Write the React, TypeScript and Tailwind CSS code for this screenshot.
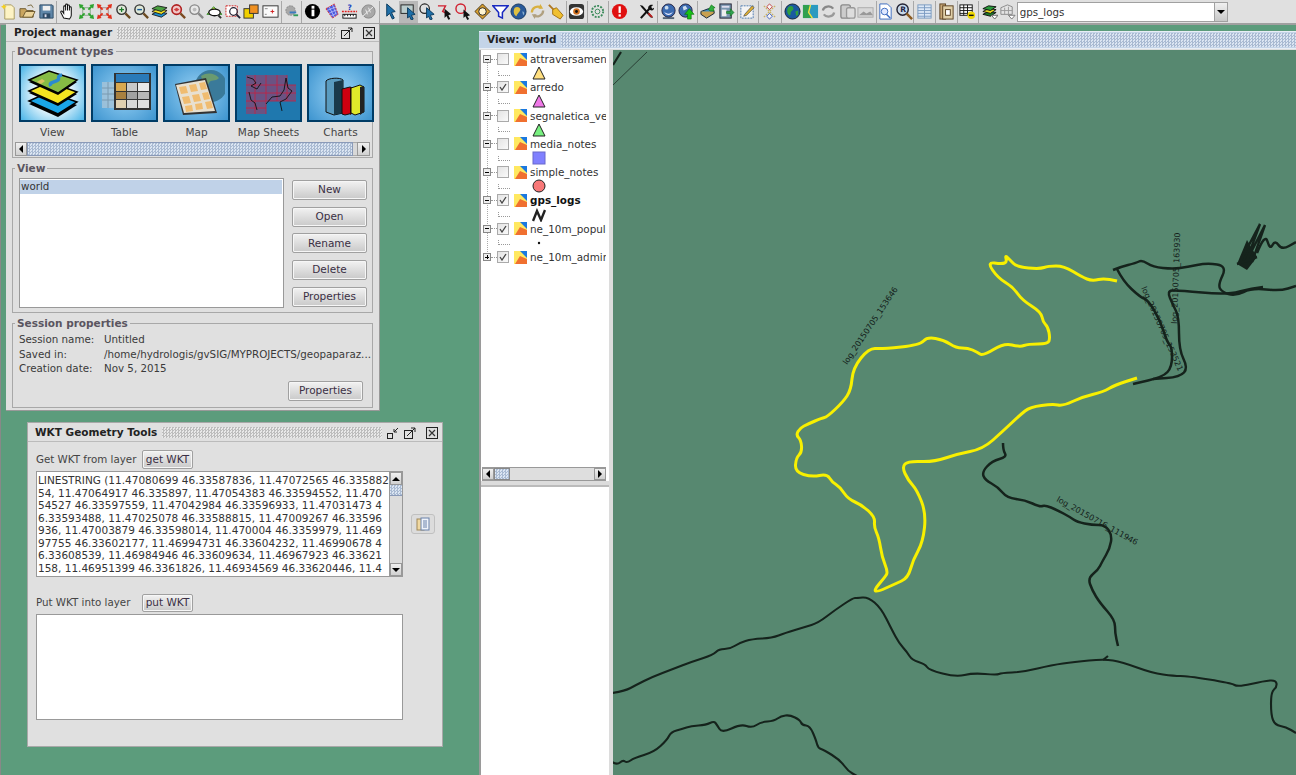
import type { ReactNode } from "react";

const font = "font-['DejaVu_Sans',sans-serif]";
const stippleGray = "bg-[repeating-conic-gradient(#bdbdbd_0_25%,#e9e9e9_0_50%)] bg-[length:3px_3px]";
const stippleBlue = "bg-[repeating-conic-gradient(#a9bad2_0_25%,#dbe5f2_0_50%)] bg-[length:3px_3px]";

// toolbar icons, 18x18 box
const ic: Record<string, ReactNode> = {
  newdoc: (<><path d="M4 2h7l3 3v12H4z" fill="#fdf3c4" stroke="#a89a60" /><path d="M3 1l1 2 2 1-2 1-1 2-1-2-2-1 2-1z" fill="#f5d020" /></>),
  open: (<><path d="M1 6h6l1 2h7v7H1z" fill="#c9a55f" stroke="#6e5a30" /><path d="M4 15l3-6h10l-3 6z" fill="#ecd49a" stroke="#6e5a30" /><path d="M9 3l4-1 2 3" fill="none" stroke="#7a6a40" /></>),
  save: (<><path d="M2 2h13l1 1v13H2z" fill="#5f86a8" stroke="#2c4a66" /><rect x="5" y="3" width="8" height="5" fill="#f0f0f0" /><rect x="5" y="11" width="8" height="5" fill="#2c4a66" /><rect x="7" y="12" width="2" height="3" fill="#dde" /></>),
  hand: (<path d="M5 16l-3-6c-.6-1.4 1-2 1.800-.8L5 11V4c0-1.300 2-1.300 2 0v4-6c0-1.300 2-1.300 2 0v6-5c0-1.300 2-1.300 2 0v5-3c0-1.300 2-1.300 2 0v8c0 2-1 3-2 4z" fill="#fff" stroke="#111" strokeWidth="1.100" />),
  extGreen: (<><rect x="5" y="5" width="8" height="8" fill="none" stroke="#8a8" /><path d="M1 1l5 1-4 4zM17 1l-5 1 4 4zM1 17l5-1-4-4zM17 17l-5-1 4-4z" fill="#2fa32f" /><path d="M3 3l4 4M15 3l-4 4M3 15l4-4M15 15l-4-4" stroke="#2fa32f" strokeWidth="2" /></>),
  extRed: (<><rect x="5" y="5" width="8" height="8" fill="none" stroke="#a88" /><path d="M1 1l5 1-4 4zM17 1l-5 1 4 4zM1 17l5-1-4-4zM17 17l-5-1 4-4z" fill="#e0301c" /><path d="M3 3l4 4M15 3l-4 4M3 15l4-4M15 15l-4-4" stroke="#e0301c" strokeWidth="2" /></>),
  zoomIn: (<><circle cx="7" cy="7" r="5" fill="#dfe8d8" stroke="#333" strokeWidth="1.500" /><path d="M4.500 7h5M7 4.500v5" stroke="#1a7a2a" strokeWidth="1.300" /><path d="M11 11l5 5" stroke="#6b4a20" strokeWidth="2.400" /></>),
  zoomOut: (<><circle cx="7" cy="7" r="5" fill="#dfe8d8" stroke="#333" strokeWidth="1.500" /><path d="M4.500 7h5" stroke="#1a5a9a" strokeWidth="1.500" /><path d="M11 11l5 5" stroke="#6b4a20" strokeWidth="2.400" /></>),
  layers: (<><path d="M1 12l6-3 10 2-6 4z" fill="#1d8fd0" stroke="#222" /><path d="M1 9l6-3 10 2-6 4z" fill="#f0e020" stroke="#222" /><path d="M1 6l6-3 10 2-6 4z" fill="#4aa040" stroke="#222" /></>),
  zoomRed: (<><circle cx="7" cy="7" r="5" fill="#f1c6c6" stroke="#b02020" strokeWidth="1.700" /><path d="M4 7l3-2 3 2-3 2z" fill="#d04040" /><path d="M11 11l5 5" stroke="#7a4a20" strokeWidth="2.400" /></>),
  zoomGray: (<><circle cx="7" cy="7" r="5" fill="#e8e8e8" stroke="#888" strokeWidth="1.500" /><circle cx="7" cy="7" r="2" fill="#bbb" /><path d="M11 11l5 5" stroke="#888" strokeWidth="2.400" /></>),
  zoomEye: (<><path d="M1 12L8 4l9 8z" fill="#dce84a" stroke="#2c8a2c" /><ellipse cx="9" cy="10" rx="6" ry="3.500" fill="#fff" stroke="#111" strokeWidth="1.400" /><path d="M13 13l3 3" stroke="#333" strokeWidth="2" /></>),
  zoomBox: (<><rect x="1" y="3" width="12" height="11" fill="#fff" stroke="#d02020" strokeDasharray="2 1" /><circle cx="9" cy="9" r="4" fill="none" stroke="#223" strokeWidth="1.300" /><path d="M12 12l4 4" stroke="#223" strokeWidth="2" /></>),
  squares: (<><rect x="1" y="6" width="10" height="10" fill="#f0d000" stroke="#333" /><rect x="7" y="2" width="9" height="9" fill="#f09020" stroke="#333" /></>),
  frame: (<><rect x="1" y="3" width="16" height="12" fill="#fafafa" stroke="#333" /><path d="M9 9h4M11 7v4" stroke="#d02020" /><path d="M3 6h3M3 12h2" stroke="#888" /></>),
  gear: (<><circle cx="8" cy="8" r="5" fill="#a8a8a8" stroke="#888" strokeDasharray="2 1" /><path d="M7 10h7" stroke="#3a7ac0" strokeWidth="2" /><path d="M11 13h5" stroke="#2f9a5a" strokeWidth="2" /></>),
  info: (<><circle cx="9" cy="9" r="8" fill="#000" /><rect x="8" y="7" width="3" height="7" fill="#fff" /><rect x="8" y="3" width="3" height="3" fill="#fff" /></>),
  polyHatch: (<><path d="M3 6l9-5 4 11-6 4z" fill="#4a5ae0" stroke="#e03030" strokeDasharray="2 1" /><path d="M4 8l10-4M6 11l9-4M8 14l6-3M6 3l6 12M10 2l4 10" stroke="#dfe4ff" strokeWidth=".6" /></>),
  measure: (<><rect x="2" y="12" width="14" height="4" fill="#fff" stroke="#111" /><path d="M4 12v2M7 12v2M10 12v2M13 12v2" stroke="#111" /><path d="M1 9h16" stroke="#e02020" strokeDasharray="2 1" strokeWidth="1.500" /><text x="7" y="7" fontSize="8" fontWeight="700" fill="#2040c0">?</text></>),
  leaf: (<><circle cx="9" cy="9" r="7" fill="#a8a8a8" stroke="#888" /><path d="M3 14L14 4M6 7l2 5M9 5l2 5" stroke="#eee" /></>),
  cursor: (<path d="M5 1l9 8-4 1 3 6-2 1-3-6-3 3z" fill="#1f6fa8" stroke="#0c3a5c" />),
  cursorBox: (<><rect x="1" y="2" width="13" height="9" fill="#bcc" stroke="#222" /><path d="M8 5l8 7-4 1 2 4-2 1-2-4-2 2z" fill="#1f6fa8" stroke="#0c3a5c" /></>),
  cursorCirc: (<><circle cx="6" cy="6" r="5" fill="none" stroke="#222" strokeWidth="1.300" /><path d="M8 5l8 7-4 1 2 4-2 1-2-4-2 2z" fill="#1f6fa8" stroke="#0c3a5c" /></>),
  cursorPoly: (<><path d="M1 3h8l-3 6 6 3" fill="none" stroke="#d02030" strokeWidth="1.500" /><path d="M8 6l7 6-3 1 2 4-2 .8-2-4-2 2z" fill="#111" /></>),
  cursorRed: (<><circle cx="6" cy="6" r="5" fill="none" stroke="#d02030" strokeWidth="1.500" /><path d="M9 7l7 6-3 1 2 3-2 1-2-4-2 2z" fill="#111" /></>),
  target: (<><path d="M9 1l8 8-8 8-8-8z" fill="#d8a030" stroke="#4a3410" /><circle cx="9" cy="9" r="4" fill="#fff5d0" stroke="#222" /></>),
  funnel: (<path d="M1 3h16l-6 7v6l-4-2v-4z" fill="#fff" stroke="#1a2ac0" strokeWidth="1.600" />),
  globeY: (<><circle cx="9" cy="9" r="8" fill="#2a5a9a" stroke="#1a3a60" /><path d="M5 5c3-2 6 0 6 2s-4 5-4 7c-3-1-4-6-2-9z" fill="#e0c040" /><path d="M13 9c2 0 3 2 1 4z" fill="#8ab0d0" /></>),
  swirl: (<><path d="M3 10c0-5 6-8 10-5" fill="none" stroke="#d8b040" strokeWidth="2.400" /><path d="M15 8c0 5-6 8-10 5" fill="none" stroke="#b0a080" strokeWidth="2.400" /><path d="M12 1l3 5-5 0z" fill="#d8b040" /><path d="M6 17l-3-5 5 0z" fill="#b0a080" /></>),
  broom: (<><path d="M2 2l6 6" stroke="#b07820" strokeWidth="2" /><path d="M6 7l4-2 7 8-3 4-8-5z" fill="#f0c030" stroke="#a07010" /></>),
  eye: (<><rect x="1" y="1" width="16" height="16" rx="3" fill="#333" /><ellipse cx="9" cy="9" rx="7" ry="4.500" fill="#fff" /><circle cx="9" cy="9" r="3.500" fill="#d07020" /><circle cx="9" cy="9" r="1.500" fill="#111" /></>),
  gearGreen: (<><circle cx="9" cy="9" r="6" fill="none" stroke="#3a8a5a" strokeWidth="2" strokeDasharray="2 1.400" /><circle cx="9" cy="9" r="2.500" fill="none" stroke="#3a8a5a" /></>),
  alert: (<><circle cx="9" cy="9" r="8" fill="#e01010" /><rect x="8" y="3.500" width="2.400" height="7" fill="#fff" /><rect x="8" y="12" width="2.400" height="2.400" fill="#fff" /></>),
  tools: (<><path d="M3 16L13 5" stroke="#111" strokeWidth="2.200" /><path d="M11 6c-1-3 2-5 5-4l-2 2 1 2 2-1c0 3-3 4-6 1z" fill="#111" /><path d="M2 2l3 1 9 10 2 3-3-1L4 5z" fill="#111" /><path d="M11 11l4 4" stroke="#c02020" strokeWidth="2" /></>),
  globeB: (<><path d="M3 16h12" stroke="#567" strokeWidth="2" /><circle cx="9" cy="8" r="7" fill="#3a6ab0" stroke="#224" /><path d="M4 9c3 3 7 3 10 0-3 5-7 5-10 0z" fill="#eef" /><circle cx="7" cy="5" r="2" fill="#cde" /></>),
  globeUp: (<><circle cx="8" cy="8" r="7" fill="#3a6ab0" stroke="#224" /><path d="M5 4l3-1 2 3-4 2z" fill="#cde" /><path d="M12 6l5 6h-3v5h-4v-5H7z" fill="#18c018" stroke="#060" strokeWidth=".6" /></>),
  boxUp: (<><path d="M1 9l8-3 6 3-8 5z" fill="#3a8ac0" stroke="#123" /><path d="M1 9v3l6 4 8-5V9" fill="#c8a050" stroke="#123" /><path d="M9 7l3-5 4 3-2 .5 1 3-4 0z" fill="#30b040" stroke="#060" strokeWidth=".6" /></>),
  docArrow: (<><rect x="2" y="1" width="12" height="15" fill="#7a96b0" stroke="#223" /><rect x="4" y="3" width="8" height="2" fill="#dde" /><rect x="4" y="7" width="5" height="7" fill="#eee" /><path d="M9 9h4V6l4 4-4 4v-3H9z" fill="#30a050" stroke="#060" strokeWidth=".5" /></>),
  pencilBox: (<><rect x="2" y="3" width="13" height="13" fill="#f4f4f4" stroke="#4a7ab0" strokeDasharray="2 1" /><path d="M6 12l8-9 2 2-8 8-3 1z" fill="#e0b030" stroke="#444" strokeWidth=".7" /></>),
  cross: (<><path d="M3 3l12 12M15 3L3 15" stroke="#c8b060" strokeWidth="1.300" strokeDasharray="2 1" /><path d="M9 1l3 3-3 3-3-3z" fill="#f4f4f4" stroke="#c04040" /><path d="M9 11l3 3-3 3-3-3z" fill="#f4f4f4" stroke="#4060c0" /></>),
  globeG: (<><circle cx="9" cy="9" r="8" fill="#1a5aa0" stroke="#123" /><path d="M5 4c3-2 5 0 5 2s-3 2-3 5-2 2-3 0-1-5 1-7z" fill="#30a040" /><path d="M12 9l3-1 0 4-2 2z" fill="#30a040" /></>),
  mapG: (<><path d="M1 2h16v14H1z" fill="#2a9ac0" /><path d="M1 2h8l-2 8 4 6H1z" fill="#30a050" /><path d="M9 2l-2 8 4 6" fill="none" stroke="#f0e040" strokeWidth="1.500" /></>),
  arrowsG: (<><path d="M3 8a6 5 0 0 1 11-2" fill="none" stroke="#888" strokeWidth="2.400" /><path d="M15 10a6 5 0 0 1-11 2" fill="none" stroke="#999" strokeWidth="2.400" /></>),
  docsG: (<><rect x="2" y="2" width="10" height="14" rx="2" fill="#ccc" stroke="#888" strokeWidth="1.400" /><rect x="8" y="5" width="9" height="11" rx="2" fill="#ddd" stroke="#999" strokeWidth="1.400" /></>),
  rectG: (<><rect x="1" y="5" width="16" height="10" fill="#d8d8d8" stroke="#aaa" /><path d="M2 13l5-4 3 2 4-2 3 4z" fill="#999" /></>),
  pageMag: (<><path d="M3 1h8l4 4v12H3z" fill="#fff" stroke="#3a6ac0" /><circle cx="8" cy="9" r="3.500" fill="#dfe8ff" stroke="#3a6ac0" /><path d="M10 12l4 4" stroke="#3a6ac0" strokeWidth="1.500" /></>),
  magR: (<><circle cx="7" cy="7" r="6" fill="#c8d8e8" stroke="#223" strokeWidth="1.500" /><text x="4.500" y="10" fontSize="8" fontWeight="700" fill="#224">R</text><path d="M11 11l6 6" stroke="#8a5a20" strokeWidth="2.600" /></>),
  tableB: (<><rect x="2" y="2" width="14" height="14" fill="#dce8f6" stroke="#7a9ac0" /><path d="M2 5h14M2 8h14M2 11h14M2 14h14M9 2v14" stroke="#7a9ac0" /></>),
  docB: (<><rect x="2" y="1" width="6" height="16" fill="#c8a878" stroke="#5a4020" /><rect x="5" y="3" width="11" height="14" fill="#e0cfa8" stroke="#5a4020" /><rect x="8" y="7" width="5" height="6" fill="#fff" stroke="#5a4020" /></>),
  tableM: (<><rect x="1" y="2" width="13" height="11" fill="#fff" stroke="#111" /><path d="M1 5h13M1 8h13M1 11h13M5 2v11M9 2v11" stroke="#111" /><circle cx="13" cy="13" r="4" fill="#f0d800" /><rect x="10.500" y="12.300" width="5" height="1.500" fill="#111" /></>),
  layersDown: (<><path d="M2 12l6-3 8 1-6 4z" fill="#1a7a2a" stroke="#111" /><path d="M2 9l6-3 8 1-6 4z" fill="#e8d820" stroke="#111" /><path d="M2 6l6-3 8 1-6 4z" fill="#2a9a3a" stroke="#111" /><path d="M11 13h7l-3.500 4z" fill="#fff" stroke="#666" /></>),
  tableDown: (<><path d="M2 5l7-3 5 2v8H2z" fill="#e4e4e4" stroke="#888" /><path d="M2 8h12M6 5v7M10 4v8" stroke="#999" /><path d="M10 13h7l-3.500 4z" fill="#fff" stroke="#777" /></>),
};

const groups: { w: string; icons: string[]; gap?: string }[] = [
  { w: "w-[57px]", icons: ["newdoc", "open", "save"] },
  { w: "w-[225px]", icons: ["hand", "extGreen", "extRed", "zoomIn", "zoomOut", "layers", "zoomRed", "zoomGray", "zoomEye", "zoomBox", "squares", "frame"] },
  { w: "w-[20px]", icons: ["gear"] },
  { w: "w-[78px]", icons: ["info", "polyHatch", "measure", "leaf"] },
  { w: "w-[187px]", icons: ["cursor", "cursorBox", "cursorCirc", "cursorPoly", "cursorRed", "target", "funnel", "globeY", "swirl", "broom"] },
  { w: "w-[21px]", icons: ["eye"] },
  { w: "w-[21px]", icons: ["gearGreen"] },
  { w: "w-[49px]", icons: ["alert", "tools"], gap: "gap-2" },
  { w: "w-[40px]", icons: ["globeB", "globeUp"] },
  { w: "w-[40px]", icons: ["boxUp", "docArrow"] },
  { w: "w-[21px]", icons: ["pencilBox"] },
  { w: "w-[23px]", icons: ["cross"] },
  { w: "w-[95px]", icons: ["globeG", "mapG", "arrowsG", "docsG", "rectG"] },
  { w: "w-[37px]", icons: ["pageMag", "magR"] },
  { w: "w-[22px]", icons: ["tableB"] },
  { w: "w-[22px]", icons: ["docB"] },
  { w: "w-[21px]", icons: ["tableM"] },
];

function Icon({ name, active }: { name: string; active?: boolean }) {
  return (
    <div className={`flex items-center justify-center w-[18.4px] h-[22px] shrink-0 ${active ? "bg-[#b8b8b8]" : ""}`}>
      <svg width="17" height="17" viewBox="0 0 18 18">{ic[name]}</svg>
    </div>
  );
}

function Toolbar() {
  return (
    <div className="flex items-center h-[23px] bg-[#e0e0e0] border-b-2 border-[#a0a0a0] box-content">
      {groups.map((g, i) => (
        <div key={i} className={`flex items-center justify-center h-[22px] border-r border-[#a8a8a8] shrink-0 ${g.w} ${g.gap ?? ""}`}>
          {g.icons.map((n) => <Icon key={n} name={n} active={n === "cursorBox"} />)}
        </div>
      ))}
      <div className="flex items-center ml-[1px] shrink-0">
        <Icon name="layersDown" />
        <Icon name="tableDown" />
      </div>
      <div className="flex w-[211px] h-[20px] border border-[#a0a0a0] bg-white shrink-0">
        <div className="flex-1 px-[2px] text-[10.3px] leading-[18px] text-[#333]">gps_logs</div>
        <div className="w-[13px] flex items-center justify-center bg-gradient-to-b from-[#f0f0f0] to-[#c8c8c8] border-l border-[#a0a0a0]">
          <div className="w-0 h-0 border-x-[4px] border-x-transparent border-t-[4px] border-t-black" />
        </div>
      </div>
    </div>
  );
}

function Btn({ label, className }: { label: string; className: string }) {
  return (
    <div className={`flex items-center justify-center rounded-[2px] border border-[#a0a0a0] bg-gradient-to-b from-[#f2f2f2] to-[#c9c9c9] shadow-[inset_0_0_0_1px_#f6f6f6] text-[10.5px] text-[#3a2f44] ${className}`}>
      {label}
    </div>
  );
}

function Arrow({ dir }: { dir: "l" | "r" | "u" | "d" }) {
  const tri = {
    l: "border-y-[4px] border-y-transparent border-r-[4px] border-r-black",
    r: "border-y-[4px] border-y-transparent border-l-[4px] border-l-black",
    u: "border-x-[4px] border-x-transparent border-b-[4px] border-b-black",
    d: "border-x-[4px] border-x-transparent border-t-[4px] border-t-black",
  }[dir];
  return <div className={`w-0 h-0 ${tri}`} />;
}

function ArrowBtn({ dir, className }: { dir: "l" | "r" | "u" | "d"; className: string }) {
  return (
    <div className={`flex items-center justify-center shrink-0 bg-gradient-to-b from-[#f0f0f0] to-[#d0d0d0] border border-[#999] ${className}`}>
      <Arrow dir={dir} />
    </div>
  );
}

function Group({ title, className, children }: { title: string; className: string; children: ReactNode }) {
  return (
    <div className={`relative border border-[#a8a8a8] ${className}`}>
      <div className="absolute left-[2px] top-[-7px] bg-[#e0e0e0] px-[2px] text-[10.5px] leading-[13px] font-bold text-[#5a5560]">{title}</div>
      {children}
    </div>
  );
}

function TitleIcon({ kind }: { kind: "max" | "close" | "min" }) {
  if (kind === "close") {
    return (
      <svg width="12" height="12" viewBox="0 0 12 12" className="shrink-0">
        <rect x=".5" y=".5" width="11" height="11" fill="#ddd" stroke="#222" />
        <path d="M3 3l6 6M9 3l-6 6" stroke="#333" strokeWidth="1.200" />
      </svg>
    );
  }
  if (kind === "min") {
    return (
      <svg width="12" height="12" viewBox="0 0 12 12" className="shrink-0">
        <rect x=".5" y="6.500" width="5" height="5" fill="none" stroke="#222" />
        <path d="M11 1L7 5M7 2v3h3" fill="none" stroke="#222" />
      </svg>
    );
  }
  return (
    <svg width="12" height="12" viewBox="0 0 12 12" className="shrink-0">
      <rect x=".5" y="3.500" width="8" height="8" fill="none" stroke="#222" />
      <path d="M3 9l8-8M7 1h4v4" fill="none" stroke="#222" />
    </svg>
  );
}

const docIcons: Record<string, ReactNode> = {
  View: (
    <svg width="56" height="50" viewBox="0 0 56 50">
      <path d="M4 36L24 27 52 37 33 49z" fill="#000" />
      <path d="M4 33L24 24 52 34 33 46z" fill="#1aa6e8" stroke="#000" strokeWidth="1.500" />
      <path d="M4 25L24 16 52 26 33 38z" fill="#000" />
      <path d="M4 23L24 14 52 24 33 36z" fill="#f4e420" stroke="#000" strokeWidth="1.500" />
      <path d="M4 14L24 5 52 14 33 27z" fill="#000" />
      <path d="M4 12L24 3 52 12 33 25z" fill="#86bc44" stroke="#000" strokeWidth="1.500" />
      <path d="M26 18c-3-4 5-4 7-6s-2-4 4-5" fill="none" stroke="#2a8ad0" strokeWidth="3.500" />
      <path d="M12 14l5-3 3 2-4 3z" fill="#d8c060" />
    </svg>
  ),
  Table: (
    <svg width="56" height="50" viewBox="0 0 56 50">
      <rect x="5" y="14" width="14" height="26" fill="#a8c4d8" opacity=".8" />
      <path d="M5 20h14M5 26h14M5 32h14M11 14v26" stroke="#7a9ab0" />
      <rect x="17" y="5" width="37" height="37" fill="#333" />
      <rect x="19" y="6" width="33" height="8" fill="#2a7ab8" />
      <rect x="19" y="15" width="10" height="8" fill="#d8a850" />
      <rect x="19" y="24" width="10" height="7" fill="#a88040" />
      <rect x="19" y="32" width="10" height="8" fill="#e0d0b0" />
      <rect x="30" y="15" width="10" height="8" fill="#c8c8c8" />
      <rect x="30" y="24" width="10" height="7" fill="#a0a0a0" />
      <rect x="30" y="32" width="10" height="8" fill="#d8d8d8" />
      <rect x="41" y="15" width="11" height="8" fill="#e8e8e8" />
      <rect x="41" y="24" width="11" height="7" fill="#b8b8b8" />
      <rect x="41" y="32" width="11" height="8" fill="#e0e0e0" />
    </svg>
  ),
  Map: (
    <svg width="56" height="50" viewBox="0 0 56 50">
      <circle cx="42" cy="18" r="16" fill="#3a7a9a" />
      <path d="M32 8c6-4 14-3 18 2-4 4-8 1-10 5s-6 0-8-7z" fill="#6a9a70" />
      <path d="M6 16l31-6 11 35-34 2z" fill="#333" />
      <path d="M7 17l29-5 10 31-31 2z" fill="#e8e0d0" />
      <path d="M10 19l7-1 2 7-7 1zM20 17l7-1 2 7-7 1zM30 15l6-1 2 7-6 1zM13 29l7-1 2 7-7 1zM23 27l7-1 2 7-7 1zM33 25l6-1 2 7-6 1zM16 38l7-1 1 6-7 1zM26 36l7-1 1 6-7 1zM36 34l6-1 2 7-6 1z" fill="#f0bc70" />
    </svg>
  ),
  "Map Sheets": (
    <svg width="56" height="50" viewBox="0 0 56 50">
      <path d="M5 7H46V17H55V33H25V46H5Z" fill="#7d4a78" opacity=".8" />
      <path d="M5 17H55M5 25H55M5 33H55M5 40H25M14 7V46M25 7V46M36 7V33M46 7V33" stroke="#c82040" strokeWidth=".8" />
      <path d="M6 9l6 2 3 4-5 3 6 3 4-6M8 24l2 8 4 3 2 7M25 36l6-7 8-1 4-6 2-12 2 10 4 3-6 8-6 3 2 9" fill="none" stroke="#111" strokeWidth=".9" />
    </svg>
  ),
  Charts: (
    <svg width="56" height="50" viewBox="0 0 56 50">
      <path d="M13 13c2-3 14-4 17-1v33l-9 2-8-3z" fill="#5a9cc0" stroke="#111" />
      <path d="M21 14l9-2v33l-9 2z" fill="#1a3a4a" />
      <path d="M29 21l8-2 3 1v25l-8 2-3-1z" fill="#d00010" stroke="#111" />
      <path d="M37 19l3 1v25l-3 2z" fill="#400" />
      <path d="M38 20l9-3 4 2v25l-9 3-4-2z" fill="#dfe82a" stroke="#111" />
      <path d="M47 19l4-1v26l-4 3z" fill="#222" />
    </svg>
  ),
};

function DocTile({ name }: { name: string }) {
  const bg: Record<string, string> = {
    View: "bg-[radial-gradient(circle,#ffffff_35%,#48b4e8_100%)]",
    Table: "bg-[radial-gradient(circle,#7ec0ea_30%,#3d94cf_100%)]",
    Map: "bg-[radial-gradient(circle,#7ec0ea_30%,#3d94cf_100%)]",
    "Map Sheets": "bg-[#1f78ae]",
    Charts: "bg-[radial-gradient(circle,#7ec0ea_30%,#3d94cf_100%)]",
  };
  return (
    <div className="flex flex-col items-center w-[67px] shrink-0">
      <div className={`flex items-center justify-center w-[67px] h-[58px] border-2 border-[#003c66] ${bg[name]}`}>
        {docIcons[name]}
      </div>
      <div className="mt-[4px] text-[10.5px] leading-[13px] text-[#444]">{name}</div>
    </div>
  );
}

function ProjectManager() {
  return (
    <div className="absolute left-[6px] top-[24px] w-[374px] h-[387px] bg-[#e0e0e0] border-r border-b border-[#999] flex flex-col">
      <div className="flex items-center h-[18px] pl-[8px] pr-[4px] gap-[5px] border-b border-[#bbb]">
        <span className="text-[10.5px] font-bold text-[#222]">Project manager</span>
        <div className={`flex-1 h-[12px] ${stippleGray}`} />
        <TitleIcon kind="max" />
        <div className="w-0" />
        <TitleIcon kind="close" />
      </div>
      <Group title="Document types" className="mx-[6px] mt-[9px] h-[107px] px-[6px] pt-[12px]">
        <div className="flex gap-[5px]">
          {["View", "Table", "Map", "Map Sheets", "Charts"].map((n) => <DocTile key={n} name={n} />)}
        </div>
        <div className="flex h-[14px] mt-[3px] -mx-[4px]">
          <ArrowBtn dir="l" className="w-[12px]" />
          <div className={`w-[326px] border border-[#8a9ab8] ${stippleBlue}`} />
          <div className="flex-1 bg-[#d8d8d8] border-y border-[#aaa]" />
          <ArrowBtn dir="r" className="w-[13px]" />
        </div>
      </Group>
      <Group title="View" className="mx-[6px] mt-[10px] h-[145px] pl-[6px] pt-[9px] flex">
        <div className="w-[265px] h-[130px] bg-white border border-[#999]">
          <div className="h-[14px] mt-[1px] pl-[1px] mr-[1px] bg-[#c0d2e8] text-[10.3px] leading-[13px] text-[#333]">world</div>
        </div>
        <div className="flex flex-col ml-[8px] pt-[2px] gap-[6.700px]">
          {["New", "Open", "Rename", "Delete", "Properties"].map((n) => <Btn key={n} label={n} className="w-[75px] h-[20px]" />)}
        </div>
      </Group>
      <Group title="Session properties" className="mx-[6px] mt-[10px] h-[85px] px-[6px] pt-[8px]">
        {[["Session name:", "Untitled"], ["Saved in:", "/home/hydrologis/gvSIG/MYPROJECTS/geopaparaz..."], ["Creation date:", "Nov 5, 2015"]].map(([k, v]) => (
          <div key={k} className="flex h-[14.500px] text-[10.3px] leading-[14px] text-[#3a3a3a] whitespace-nowrap">
            <div className="w-[85px] shrink-0">{k}</div>
            <div>{v}</div>
          </div>
        ))}
        <div className="flex justify-end mt-[5px] pr-[3px]">
          <Btn label="Properties" className="w-[75px] h-[20px]" />
        </div>
      </Group>
    </div>
  );
}

const wkt = [
  "LINESTRING (11.47080699 46.33587836, 11.47072565 46.335882",
  "54, 11.47064917 46.335897, 11.47054383 46.33594552, 11.470",
  "54527 46.33597559, 11.47042984 46.33596933, 11.47031473 4",
  "6.33593488, 11.47025078 46.33588815, 11.47009267 46.33596",
  "936, 11.47003879 46.33598014, 11.470004 46.3359979, 11.469",
  "97755 46.33602177, 11.46994731 46.33604232, 11.46990678 4",
  "6.33608539, 11.46984946 46.33609634, 11.46967923 46.33621",
  "158, 11.46951399 46.3361826, 11.46934569 46.33620446, 11.4",
];

function WktTools() {
  return (
    <div className="absolute left-[27px] top-[422px] w-[416px] h-[325px] bg-[#e0e0e0] border border-[#a8a8a8] flex flex-col">
      <div className="flex items-center h-[19px] pt-[1px] pl-[7px] pr-[4px] gap-[5px] border-b border-[#bbb]">
        <span className="text-[10.5px] font-bold text-[#222]">WKT Geometry Tools</span>
        <div className={`flex-1 h-[11px] ${stippleGray}`} />
        <TitleIcon kind="min" />
        <TitleIcon kind="max" />
        <div className="w-0" />
        <TitleIcon kind="close" />
      </div>
      <div className="flex items-center h-[19px] mt-[8px] pl-[8px] text-[10.3px] text-[#444] whitespace-nowrap">
        <span className="w-[106px]">Get WKT from layer</span>
        <Btn label="get WKT" className="w-[51px] h-[19px]" />
      </div>
      <div className="flex items-center mt-[2px] pl-[8px]">
        <div className="flex w-[367px] h-[106px] bg-white border border-[#999]">
          <div className="flex-1 overflow-hidden pl-[1px] pt-[2px] text-[10.5px] leading-[12.500px] text-[#333] whitespace-nowrap">
            {wkt.map((l) => <div key={l}>{l}</div>)}
          </div>
          <div className="flex flex-col w-[13px] bg-[#dcdcdc] border-l border-[#999]">
            <ArrowBtn dir="u" className="h-[13px]" />
            <div className={`h-[11px] border-b border-[#8a9ab8] ${stippleBlue}`} />
            <div className="flex-1" />
            <ArrowBtn dir="d" className="h-[13px]" />
          </div>
        </div>
        <div className="flex items-center justify-center ml-[8px] w-[24px] h-[20px] rounded-[3px] border border-[#c0c0c0] bg-[#dcdcdc]">
          <svg width="14" height="14" viewBox="0 0 14 14">
            <rect x="1" y="2" width="7" height="11" fill="#f0d8a0" stroke="#a08858" />
            <rect x="5" y="1" width="8" height="12" fill="#eef2fa" stroke="#6a82aa" />
            <path d="M7 4h4M7 6h4M7 8h4M7 10h4" stroke="#6a82aa" />
          </svg>
        </div>
      </div>
      <div className="flex items-center h-[18px] mt-[17px] pl-[8px] text-[10.3px] text-[#444] whitespace-nowrap">
        <span className="w-[106px]">Put WKT into layer</span>
        <Btn label="put WKT" className="w-[51px] h-[18px]" />
      </div>
      <div className="ml-[8px] mt-[2px] w-[367px] h-[106px] bg-white border border-[#999]" />
    </div>
  );
}

const layers: { name: string; checked: boolean; bold?: boolean; plus?: boolean; sym?: ReactNode }[] = [
  { name: "attraversamen", checked: false, sym: <path d="M7 1l6 12H1z" fill="#ffdf80" stroke="#222" /> },
  { name: "arredo", checked: true, sym: <path d="M7 1l6 12H1z" fill="#f078e8" stroke="#222" /> },
  { name: "segnaletica_ve", checked: false, sym: <path d="M7 1l6 12H1z" fill="#78f080" stroke="#222" /> },
  { name: "media_notes", checked: false, sym: <rect x="1" y="1" width="12" height="12" fill="#8080ff" stroke="#6868cc" /> },
  { name: "simple_notes", checked: false, sym: <circle cx="7" cy="7" r="6" fill="#f87878" stroke="#222" /> },
  { name: "gps_logs", checked: true, bold: true, sym: <path d="M1 13L5 3l4 9 4-10" fill="none" stroke="#222" strokeWidth="2.400" /> },
  { name: "ne_10m_popul", checked: true, sym: <circle cx="7" cy="7" r="1.200" fill="#111" /> },
  { name: "ne_10m_admin", checked: true, plus: true },
];

function TreeRow({ l }: { l: (typeof layers)[number] }) {
  return (
    <div className="h-[28.300px]">
      <div className="flex items-center h-[14px]">
        <div className="relative z-10 flex items-center justify-center shrink-0 w-[8px] h-[8px] ml-[2px] border border-[#888] bg-[#eee]">
          <div className="w-[4px] h-[1px] bg-black" />
          {l.plus && <div className="absolute w-[1px] h-[4px] bg-black" />}
        </div>
        <div className="w-[6px] shrink-0 border-t border-dotted border-[#999]" />
        <div className="flex items-center justify-center shrink-0 w-[12px] h-[12px] border border-[#aaa] bg-gradient-to-br from-[#e4e4e4] to-[#fafafa]">
          {l.checked && (
            <svg width="8" height="8" viewBox="0 0 8 8">
              <path d="M1 4l2 3 4-6" fill="none" stroke="#444" strokeWidth="1.300" />
            </svg>
          )}
        </div>
        <svg width="13" height="13" viewBox="0 0 13 13" className="ml-[5px] shrink-0">
          <rect width="13" height="13" fill="#ffe860" />
          <path d="M6 0h7v7z" fill="#1a78e0" />
          <path d="M1 13l5-8 7 3v5z" fill="#f07030" />
        </svg>
        <span className={`ml-[3px] text-[10.4px] leading-[14px] whitespace-nowrap ${l.bold ? "font-bold text-[#111]" : "text-[#333]"}`}>{l.name}</span>
      </div>
      {l.sym && (
        <div className="flex items-center h-[14.300px] pl-[17px]">
          <div className="w-[12px] h-[5px] border-l border-b border-dotted border-[#999]" />
          <svg width="14" height="14" viewBox="0 0 14 14" className="ml-[22px] shrink-0">{l.sym}</svg>
        </div>
      )}
    </div>
  );
}

function Tree() {
  return (
    <div className="flex flex-col w-[134px] shrink-0 border-l-2 border-[#9a9a9a] border-r-[4px] border-r-[#dcdcdc] bg-white">
      <div className="relative h-[417px] mr-[3px] overflow-hidden">
        <div className="absolute left-[6px] top-[8px] h-[198px] border-l border-dotted border-[#aaa]" />
        <div className="relative pt-[2px]">
          {layers.map((l) => <TreeRow key={l.name} l={l} />)}
        </div>
      </div>
      <div className="flex h-[14px] mr-[3px] ml-[1px] border-y border-[#999] bg-[#dedede]">
        <ArrowBtn dir="l" className="w-[12px]" />
        <div className={`w-[16px] border border-[#888] ${stippleBlue}`} />
        <div className="flex-1" />
        <ArrowBtn dir="r" className="w-[12px]" />
      </div>
      <div className="h-[6px] bg-[#dcdcdc] border-b-2 border-[#bbb]" />
      <div className="flex-1 bg-white" />
    </div>
  );
}

const yellow =
  "M1117 281L1105 278L1092 281L1082 277L1064 266L1048 266L1040 269L1017 267L1010 260L1005 255L1007 262L1002 264L987 262L998 278L1013 287L1022 300L1041 312L1043 322L1048 327L1050 338L1048 344L1028 344L1020 347L1004 343L983 356L977 352L968 348L956 348L944 340L927 337L920 345L882 349L869 348L853 368L851 390L843 402L827 417L822 418L808 424L800 428L796 435L801 440L802 452L796 458L795 472L812 477L827 474L832 482L840 487L848 499L862 505L875 517L874 527L879 538L882 557L888 572L885 577L874 590L877 592L895 584L908 578L913 560L923 542L926 513L917 490L908 480L902 467L908 461L934 462L957 454L983 449L1003 431L1020 415L1030 407L1053 404L1063 406L1082 397L1103 392L1115 385L1137 378";

const blackTop = [
  "M1113 270L1120 267L1136 263L1142 260L1153 267L1173 269L1187 267L1207 263L1227 266L1218 285L1222 292L1235 296L1252 288L1280 291L1296 286",
  "M1117 269L1123 281L1140 297L1148 300L1160 320L1167 342L1172 347L1172 367L1163 377L1133 384",
  "M1263 287L1252 288L1227 295L1177 290L1167 291L1173 305L1179 317L1179 350L1188 368L1180 377L1153 379",
  "M1257 253L1265 233L1270 250L1275 240L1282 250L1296 242",
  "M1003 443L1003 450L1007 457L992 461L982 472L985 480L998 487L1007 498L1025 500L1040 507L1045 505L1057 510L1070 517L1077 522L1092 525L1105 525L1112 535L1110 548L1102 562L1098 570L1088 578L1092 590L1100 603L1115 620L1115 633L1118 646",
];

const blackBottom = [
  "M612 693L625 691L636 685L652 677L673 669L691 662L713 655L719 649L730 649L739 643L752 639L772 638L785 633L805 627L818 623L835 610L853 598L857 598L868 597L881 608L892 630L899 643L907 652L912 660L925 664L929 670L956 677L973 673L997 675L1001 673L1023 672L1052 665L1074 662L1104 659L1122 662L1152 673L1174 676L1187 676L1231 683L1238 687L1264 681L1276 680L1277 687L1271 692L1271 715L1275 725L1286 727L1296 733",
  "M612 762L617 765L623 760L627 763L634 758L654 752L667 740L671 732L682 729L691 726L706 725L714 721L717 725L722 733L741 724L752 728L761 722L774 721L781 716L790 715L800 720L802 725L810 726L816 740L818 748L824 750L840 760L848 771L857 776",
];

// rough tracks look better with the corners rounded off
function smooth(d: string) {
  const p = d.slice(1).split("L").map((s) => s.split(" ").map(Number));
  let out = `M${p[0][0]} ${p[0][1]}`;
  for (let i = 1; i < p.length - 1; i++) {
    const mx = (p[i][0] + p[i + 1][0]) / 2;
    const my = (p[i][1] + p[i + 1][1]) / 2;
    out += `Q${p[i][0]} ${p[i][1]} ${mx} ${my}`;
  }
  const last = p[p.length - 1];
  return `${out}L${last[0]} ${last[1]}`;
}

function MapCanvas() {
  return (
    <div className="flex-1 min-w-0 bg-[#578870]">
      <svg width="683" height="725" viewBox="613 50 683 725" className="block">
        <path d="M647 52L613 85" fill="none" stroke="#2a3f35" strokeWidth="1" />
        <path d="M621 52L613 65M1108 656L1103 660" fill="none" stroke="#15231c" strokeWidth="2.200" />
        {blackTop.map((d) => <path key={d} d={smooth(d)} fill="none" stroke="#15231c" strokeWidth="2.500" strokeLinejoin="round" />)}
        {blackBottom.map((d) => <path key={d} d={smooth(d)} fill="none" stroke="#15231c" strokeWidth="2.100" strokeLinejoin="round" />)}
        <path d="M1237 264L1247 240L1257 257L1247 270Z" fill="#15231c" />
        <path d="M1240 262L1260 224L1246 262L1265 225L1252 262M1237 264L1257 257" fill="none" stroke="#15231c" strokeWidth="2.400" />
        <path d={smooth(yellow)} fill="none" stroke="#f8f000" strokeWidth="3" strokeLinejoin="round" />
        <g fontFamily="'DejaVu Sans', sans-serif" fontSize="8" fill="#14211b">
          <text transform="translate(847,365) rotate(-56)">log_20150705_153646</text>
          <text transform="translate(1177,324) rotate(-88)">log_20150705_163930</text>
          <text transform="translate(1141,288) rotate(66)">log_20150705_153521</text>
          <text transform="translate(1056,501) rotate(29)">log_20150716_111946</text>
        </g>
      </svg>
    </div>
  );
}

function ViewWindow() {
  return (
    <div className="absolute left-[479px] top-[31px] right-0 bottom-0 flex flex-col bg-[#dcdcdc]">
      <div className="flex items-center shrink-0 h-[18px] pl-[8px] gap-[5px] bg-[#c4d4e8] border-t border-[#e8eef6] border-b border-[#a8b4c8]">
        <span className="text-[10.5px] font-bold text-[#222] whitespace-nowrap">View: world</span>
        <div className={`flex-1 h-[14px] ${stippleBlue}`} />
      </div>
      <div className="flex flex-1 min-h-0 pt-[1px]">
        <Tree />
        <MapCanvas />
      </div>
    </div>
  );
}

export default function App() {
  return (
    <div className={`relative w-[1296px] h-[775px] overflow-hidden bg-[#5c9c7c] shadow-[inset_1px_0_0_#888] ${font}`}>
      <Toolbar />
      <ProjectManager />
      <WktTools />
      <ViewWindow />
    </div>
  );
}
